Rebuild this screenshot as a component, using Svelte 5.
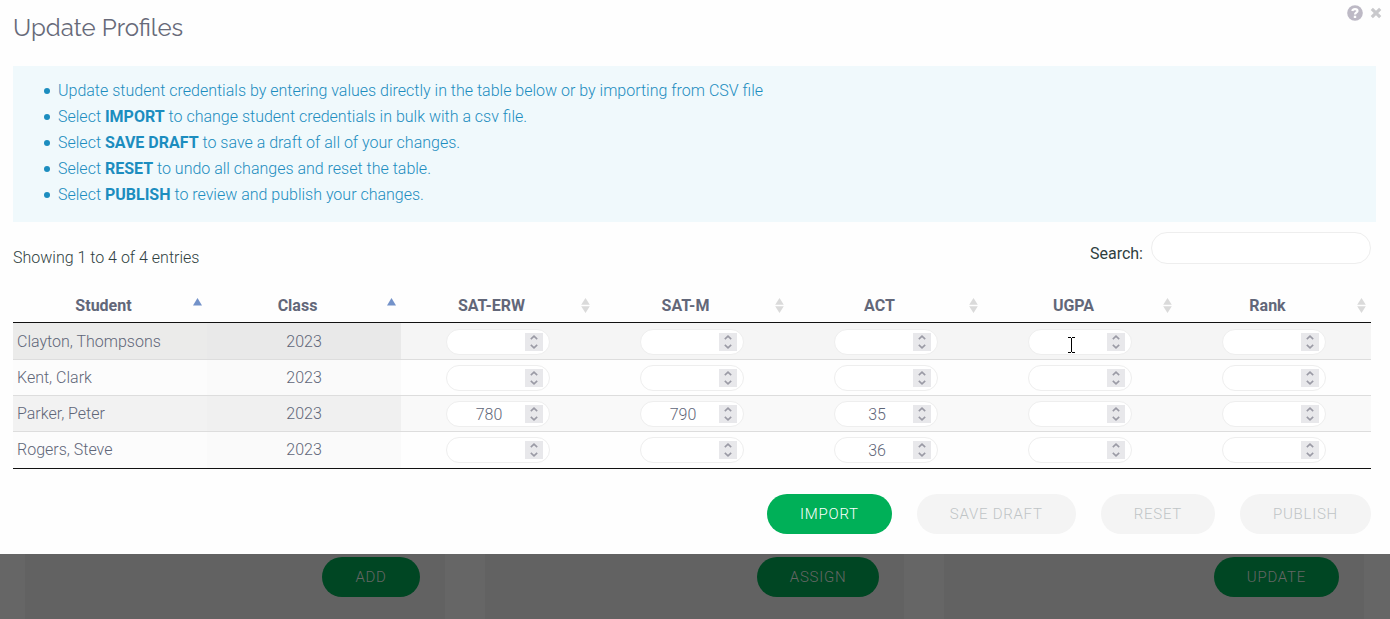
<script>
  const columns = ['Student', 'Class', 'SAT-ERW', 'SAT-M', 'ACT', 'UGPA', 'Rank'];
  const scoreNames = columns.slice(2);

  let rows = $state([
    { name: 'Clayton, Thompsons', year: '2023', scores: [null, null, null, null, null] },
    { name: 'Kent, Clark', year: '2023', scores: [null, null, null, null, null] },
    { name: 'Parker, Peter', year: '2023', scores: [780, 790, 35, null, null] },
    { name: 'Rogers, Steve', year: '2023', scores: [null, null, 36, null, null] }
  ]);

  const tips = [
    ['Update student credentials by entering values directly in the table below or by importing from CSV file', '', ''],
    ['Select ', 'IMPORT', ' to change student credentials in bulk with a csv file.'],
    ['Select ', 'SAVE DRAFT', ' to save a draft of all of your changes.'],
    ['Select ', 'RESET', ' to undo all changes and reset the table.'],
    ['Select ', 'PUBLISH', ' to review and publish your changes.']
  ];

  const cards = ['ADD', 'ASSIGN', 'UPDATE'];

  function step(row, index, amount) {
    row.scores[index] = (row.scores[index] ?? 0) + amount;
  }
</script>

<div class="page">
  <main class="dialog">
    <header>
      <h1>Update Profiles</h1>
      <div class="tools">
        <button class="icon" aria-label="Help">
          <svg width="16" height="16" viewBox="0 0 16 16">
            <circle cx="8" cy="8" r="7.8" fill="#bdb9c5" />
            <path d="M5.3 6C5.600 4.700 6.600 4.100 8 4.100c1.500 0 2.500.7 2.500 1.800C10.500 7.500 8 7.400 8 9.600" fill="none" stroke="#fff" stroke-width="2.200" />
            <rect x="6.800" y="10.700" width="2.400" height="2.300" fill="#fff" />
          </svg>
        </button>
        <button class="icon" aria-label="Close">
          <svg width="12" height="12" viewBox="0 0 12 12">
            <path d="M1.800 1.800l8.400 8.400M10.200 1.800L1.800 10.200" stroke="#c9c9cc" stroke-width="3.200" />
          </svg>
        </button>
      </div>
    </header>

    <ul class="info">
      {#each tips as [before, strong, after]}
        <li>{before}{#if strong}<b>{strong}</b>{/if}{after}</li>
      {/each}
    </ul>

    <div class="content">
      <div class="filter">
        <p>Showing 1 to 4 of 4 entries</p>
        <label for="search">Search:</label>
        <input id="search" type="search" />
      </div>

      <table>
        <thead>
          <tr>
            {#each columns as column, i}
              <th scope="col">
                <div class="head">
                  <span>{column}</span>
                  <svg width="9" height="15" viewBox="0 0 9 15" aria-hidden="true">
                    {#if i < 2}
                      <path d="M0 7.500L4.500 0L9 7.500z" fill="#7392c9" />
                    {:else}
                      <path d="M0.200 6.800L4.500 0L8.800 6.800zM0.200 8.200L4.500 15L8.800 8.200z" fill="#dadada" />
                    {/if}
                  </svg>
                </div>
              </th>
            {/each}
          </tr>
        </thead>
        <tbody>
          {#each rows as row, r}
            <tr class:active={r === 0}>
              <td class="name">{row.name}</td>
              <td class="year">{row.year}</td>
              {#each scoreNames as score, c}
                <td>
                  <div class="number">
                    <input type="number" aria-label="{score} for {row.name}" bind:value={row.scores[c]} />
                    <div class="stepper">
                      <button aria-label="Increase {score} for {row.name}" onclick={() => step(row, c, 1)}>
                        <svg width="8" height="5" viewBox="0 0 8 5"><path d="M0.800 4.200L4 1.200L7.200 4.200" /></svg>
                      </button>
                      <button aria-label="Decrease {score} for {row.name}" onclick={() => step(row, c, -1)}>
                        <svg width="8" height="5" viewBox="0 0 8 5"><path d="M0.800 0.800L4 3.800L7.200 0.800" /></svg>
                      </button>
                    </div>
                    {#if r === 0 && score === 'UGPA'}
                      <svg class="caret" width="7" height="16" viewBox="0 0 7 16" aria-hidden="true">
                        <path d="M0 0.500H3M4 0.500H7M3.500 1V15M0 15.500H3M4 15.500H7" />
                      </svg>
                    {/if}
                  </div>
                </td>
              {/each}
            </tr>
          {/each}
        </tbody>
      </table>

      <div class="actions">
        <button class="pill">IMPORT</button>
        <button class="pill" disabled>SAVE DRAFT</button>
        <button class="pill" disabled>RESET</button>
        <button class="pill" disabled>PUBLISH</button>
      </div>
    </div>
  </main>

  <section class="behind">
    {#each cards as card}
      <div class="card"><button class="pill dim">{card}</button></div>
    {/each}
  </section>
</div>

<style>
  :global(body) {
    margin: 0;
    background: #666;
  }

  .page {
    display: flex;
    flex-direction: column;
    min-height: 100vh;
    font: 300 16px/24px Roboto, sans-serif;
    color: #5f6678;
  }

  button,
  input {
    box-sizing: border-box;
    margin: 0;
    padding: 0;
    border: 0;
    font: inherit;
    color: inherit;
  }

  button {
    background: none;
    cursor: pointer;
  }

  svg {
    display: block;
  }

  .dialog {
    padding: 5px 14px 20px 13px;
    background: #fefefe;
  }

  header {
    display: flex;
    justify-content: space-between;
    align-items: flex-start;
    height: 61px;
  }

  h1 {
    margin: 7px 0 0;
    font: 400 24px/32px Raleway, Lato, sans-serif;
    color: #676a79;
  }

  .tools {
    display: flex;
    align-items: center;
    gap: 7px;
    margin-right: -6px;
  }

  .info {
    margin: 0;
    padding: 12px 16px 14px 45px;
    background: #f0f9fc;
    color: #1c8dbf;
    line-height: 26px;
    list-style: none;
  }

  .info li::before {
    content: '';
    display: inline-block;
    width: 6px;
    height: 6px;
    margin: 0 8px 2px -14px;
    border-radius: 50%;
    background: currentColor;
  }

  .info b {
    font-weight: 700;
  }

  .content {
    padding-right: 5px;
  }

  .filter {
    display: flex;
    align-items: center;
    gap: 8px;
    height: 62px;
    box-sizing: border-box;
    padding-bottom: 10px;
    color: #2f3f3f;
  }

  .filter p {
    flex: 1;
    margin: 20px 0 0;
  }

  .filter label {
    margin-top: 12px;
    font-weight: 400;
  }

  .filter input {
    width: 220px;
    height: 32px;
    padding: 0 14px;
    border: 1px solid #eee;
    border-radius: 16px;
    background: #fff;
    appearance: none;
  }

  table {
    width: 100%;
    table-layout: fixed;
    border-spacing: 0;
    border-bottom: 1px solid #111;
  }

  th {
    padding: 8px 5px 2px 4px;
    border-bottom: 1px solid #111;
    font-weight: 700;
    color: #626779;
  }

  .head {
    display: flex;
    align-items: center;
    gap: 3px;
    height: 28px;
  }

  .head span {
    flex: 1;
  }

  .head svg {
    margin-bottom: 2px;
  }

  td {
    height: 26px;
    padding: 5px 4px 4px;
    border-top: 1px solid #ddd;
  }

  tr:first-child td {
    border-top-color: transparent;
  }

  tbody tr:last-child td {
    padding-bottom: 5px;
  }

  tbody tr:nth-child(odd) {
    background: #f9f9f9;
  }

  tbody tr:nth-child(odd) .name {
    background: #f2f2f2;
  }

  tbody tr:nth-child(odd) .year {
    background: #f0f0f0;
  }

  tbody tr:nth-child(even) .name {
    background: #fcfcfc;
  }

  tbody tr:nth-child(even) .year {
    background: #fafafa;
  }

  tbody tr.active {
    background: #f5f5f5;
  }

  tbody tr.active .name {
    background: #ebebea;
  }

  tbody tr.active .year {
    background: #e9e9e9;
  }

  .year {
    text-align: center;
  }

  .number {
    position: relative;
    display: flex;
    align-items: center;
    box-sizing: border-box;
    width: 104px;
    height: 26px;
    margin: 0 auto;
    padding: 0 6px;
    border: 1px solid #eee;
    border-radius: 13px;
    background: #fff;
  }

  .number input {
    flex: 1;
    min-width: 0;
    height: 24px;
    padding-top: 2px;
    background: none;
    text-align: center;
    outline: none;
    appearance: textfield;
  }

  .number input::-webkit-inner-spin-button {
    display: none;
  }

  .stepper {
    display: flex;
    flex-direction: column;
    width: 18px;
    height: 18px;
    background: #e8e8eb;
  }

  .stepper button {
    display: flex;
    flex: 1;
    align-items: center;
    justify-content: center;
  }

  .stepper path {
    fill: none;
    stroke: #9a9aa5;
    stroke-width: 1.6;
  }

  .caret {
    position: absolute;
    left: 39px;
    top: 7px;
  }

  .caret path {
    stroke: #000;
  }

  .actions {
    display: flex;
    justify-content: flex-end;
    gap: 25px;
    margin-top: 25px;
  }

  .pill {
    height: 40px;
    padding: 0 33px;
    border-radius: 20px;
    background: #00b058;
    color: #fff;
    font-size: 15px;
    letter-spacing: 0.05em;
  }

  .pill:disabled {
    background: #f4f4f4;
    color: #bfc4c6;
    cursor: default;
  }

  .behind {
    display: flex;
    flex: 1;
    gap: 40px;
    padding: 0 26px 0 25px;
  }

  .card {
    display: flex;
    flex: 1;
    justify-content: flex-end;
    align-items: flex-start;
    padding: 3px 25px 22px;
    background: #626262;
  }

  .dim {
    background: #004623;
    color: #666;
  }
</style>
